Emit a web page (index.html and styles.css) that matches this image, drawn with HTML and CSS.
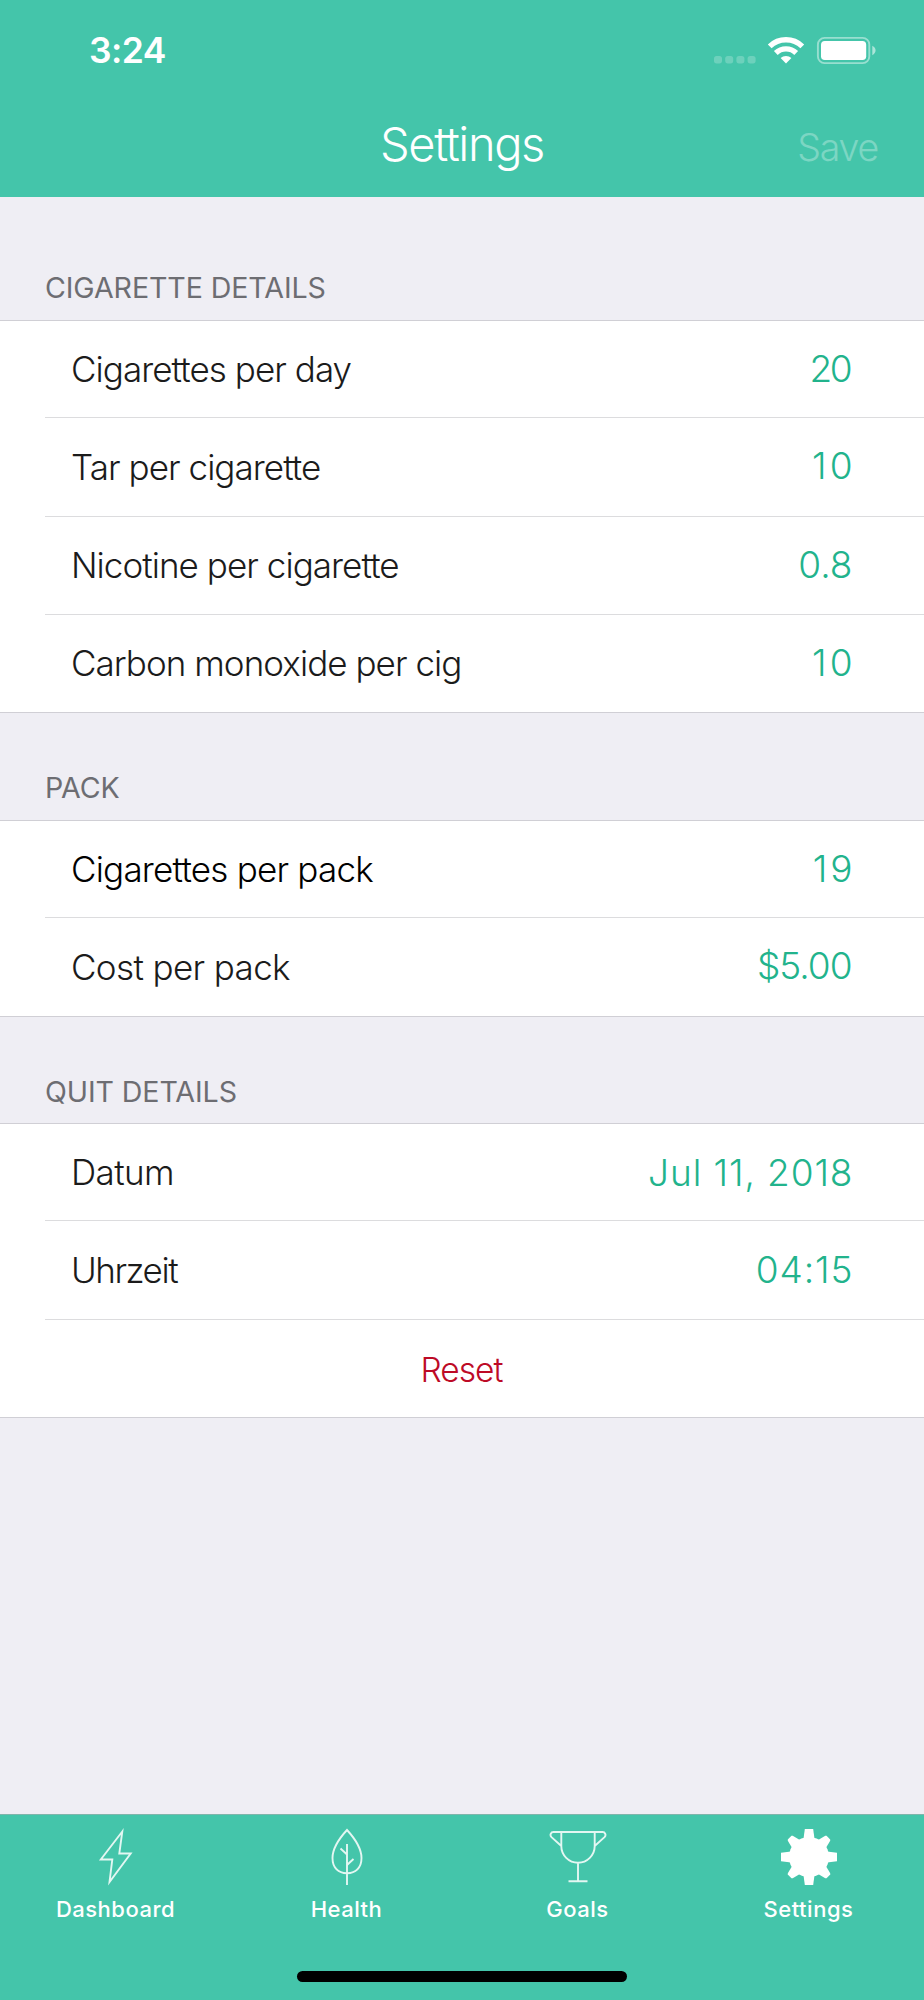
FILE: index.html
```html
<!DOCTYPE html>
<html lang="en">
<head>
<meta charset="utf-8">
<title>Settings</title>
<link rel="stylesheet" href="styles.css">
</head>
<body>
<div class="screen">
  <header class="navbar">
    <div class="status">
      <span class="clock">3:24</span>
      <svg class="status-icons" width="166" height="30" viewBox="0 0 166 30">
        <g fill="#fff" fill-opacity=".22">
          <rect x="0" y="20" width="8" height="7.400" rx="2.600"/><rect x="11.200" y="20" width="8" height="7.400" rx="2.600"/><rect x="22.400" y="20" width="8" height="7.400" rx="2.600"/><rect x="33.600" y="20" width="8" height="7.400" rx="2.600"/>
        </g>
        <g fill="none" stroke="#fff" stroke-width="5.400">
          <path d="M55.700 10.400a23.400 23.400 0 0 1 32.600 0"/>
          <path d="M61.800 17a14.600 14.600 0 0 1 20.400 0"/>
        </g>
        <path d="M72 27.500l-5.400-5.400a7.800 7.800 0 0 1 10.800 0z" fill="#fff"/>
        <rect x="103.900" y="1.900" width="51.400" height="25.200" rx="6.600" fill="none" stroke="#fff" stroke-opacity=".45" stroke-width="1.900"/>
        <rect x="107" y="5" width="45.200" height="19" rx="3.800" fill="#fff"/>
        <path d="M158.300 9.800v9.400c4.400-2 4.400-7.400 0-9.400z" fill="#fff" fill-opacity=".55"/>
      </svg>
    </div>
    <div class="titlebar">
      <h1 class="title">Settings</h1>
      <span class="save">Save</span>
    </div>
  </header>

  <main class="content">
    <section class="group first">
      <h2 class="heading">CIGARETTE DETAILS</h2>
      <div class="rows">
        <div class="row"><span class="label">Cigarettes per day</span><span class="value narrow">20</span></div>
        <div class="row"><span class="label">Tar per cigarette</span><span class="value wide">10</span></div>
        <div class="row"><span class="label">Nicotine per cigarette</span><span class="value">0.8</span></div>
        <div class="row"><span class="label">Carbon monoxide per cig</span><span class="value wide">10</span></div>
      </div>
    </section>
    <section class="group">
      <h2 class="heading">PACK</h2>
      <div class="rows">
        <div class="row"><span class="label strong">Cigarettes per pack</span><span class="value wide">19</span></div>
        <div class="row"><span class="label loose">Cost per pack</span><span class="value money">$5.00</span></div>
      </div>
    </section>
    <section class="group">
      <h2 class="heading">QUIT DETAILS</h2>
      <div class="rows">
        <div class="row"><span class="label loose">Datum</span><span class="value date">Jul 11, 2018</span></div>
        <div class="row"><span class="label tight">Uhrzeit</span><span class="value date">04:15</span></div>
        <div class="row action"><span class="reset">Reset</span></div>
      </div>
    </section>
  </main>

  <nav class="tabbar">
    <div class="tabs">
      <div class="tab">
        <svg class="icon" width="58" height="58" viewBox="0 0 58 58"><path d="M35.300 3.500L13.800 31.500h11.500L22.500 54 43.700 25.500H32.300z"/></svg>
        <span class="tab-label">Dashboard</span>
      </div>
      <div class="tab">
        <svg class="icon" width="58" height="58" viewBox="0 0 58 58"><path d="M29 2C22 9.600 14.500 19.500 14.500 30C14.500 40 20.500 44.800 29 45.300C37.500 44.800 43.500 40 43.500 30C43.500 19.500 36 9.600 29 2zM29 16v41M22.500 20.500L29 26.500M35.500 31L29 37"/></svg>
        <span class="tab-label">Health</span>
      </div>
      <div class="tab">
        <svg class="icon" width="58" height="58" viewBox="0 0 58 58"><path d="M12.300 4v14a16.700 16.700 0 0 0 33.400 0V4M12.300 18L2.500 9.200C.5 7 1.800 4 4.500 4h49c2.700 0 4 3 2 5.200L45.700 18M29 34.700v18.500M19.500 53.200h19"/></svg>
        <span class="tab-label">Goals</span>
      </div>
      <div class="tab">
        <svg class="icon solid" width="58" height="58" viewBox="-29 -29 58 58">
          <circle r="20"/>
          <g><path id="axis-tooth" d="M-5.500-18L-4.200-28H4.200L5.500-18z"/><use href="#axis-tooth" transform="rotate(90)"/><use href="#axis-tooth" transform="rotate(180)"/><use href="#axis-tooth" transform="rotate(270)"/></g>
          <g transform="rotate(45)"><path id="corner-tooth" d="M-5.600-18L-3.500-26.500L-2.600-27.400H2.600L3.500-26.500L5.600-18z"/><use href="#corner-tooth" transform="rotate(90)"/><use href="#corner-tooth" transform="rotate(180)"/><use href="#corner-tooth" transform="rotate(270)"/></g>
        </svg>
        <span class="tab-label">Settings</span>
      </div>
    </div>
    <div class="home-indicator"></div>
  </nav>
</div>
</body>
</html>
```

FILE: styles.css
```css
* { box-sizing: border-box; }
body { margin: 0; font-family: Inter, "Liberation Sans", sans-serif; background: #efeef4; }
.screen { display: flex; flex-direction: column; width: 924px; height: 2000px; overflow: hidden; }
.navbar { flex: none; height: 197px; background: #44c5aa; color: #fff; }
.status { display: flex; justify-content: space-between; align-items: center; height: 102px; padding: 0 44px 0 89px; }
.clock { font-size: 35.5px; font-weight: 600; line-height: 40px; letter-spacing: -.6px; }
.status-icons { display: block; }
.titlebar { display: grid; grid-template-columns: 1fr auto 1fr; align-items: baseline; padding: 12px 46px 0; }
.title { grid-column: 2; margin: 0; font-size: 47px; font-weight: 300; line-height: 60px; letter-spacing: -1.4px; }
.save { justify-self: end; font-size: 37.5px; font-weight: 300; letter-spacing: -1.2px; opacity: .3; }
.content { flex: 1; min-height: 0; }
.heading { margin: 0; height: 107px; padding: 58px 0 0 45px; color: #6d6d72; font-size: 28.6px; font-weight: 400; line-height: 34px; letter-spacing: -.1px; }
.first .heading { height: 123px; padding-top: 74px; }
.group:last-child .heading { height: 106.4px; }
.rows { background: #fff; border-top: 1px solid #d0cfd5; border-bottom: 1px solid #d0cfd5; }
.row { display: flex; justify-content: space-between; align-items: center; height: 96.4px; margin-left: 45px; padding: 0 72px 0 26px; }
.row + .row { height: 98.2px; border-top: 1px solid #dcdcde; }
.label { font-size: 35px; font-weight: 300; letter-spacing: -.95px; color: #1b1b1b; }
.strong { letter-spacing: -.78px; color: #000; }
.loose { letter-spacing: -.62px; }
.tight { letter-spacing: -1.45px; }
.value { --track: 0px; margin-right: calc(-.5px - var(--track)); padding-bottom: 2px; font-size: 37px; font-weight: 300; letter-spacing: var(--track); color: #22b38c; }
.narrow { --track: -2.5px; }
.wide { --track: 3px; }
.money { --track: -1px; }
.date { --track: .9px; padding-bottom: 0; }
.action { justify-content: center; padding: 4px 46px 0 0; }
.reset { font-size: 33.5px; font-weight: 300; letter-spacing: -1px; color: #bd0a26; }
.tabbar { flex: none; height: 186px; background: #44c5aa; border-top: 1px solid #7fb5ab; color: #fff; }
.tabs { display: grid; grid-template-columns: repeat(4, 1fr); height: 156px; padding: 13px 0 0; }
.tab { display: flex; flex-direction: column; align-items: center; }
.icon { display: block; fill: none; stroke: #fff; stroke-opacity: .85; stroke-width: 1.9; }
.solid { fill: #fff; stroke: none; }
.tab-label { margin-top: 8px; font-size: 22px; font-weight: 500; line-height: 30px; letter-spacing: .5px; }
.home-indicator { width: 330px; height: 11px; margin: 0 auto; border-radius: 6px; background: #000; }
```
